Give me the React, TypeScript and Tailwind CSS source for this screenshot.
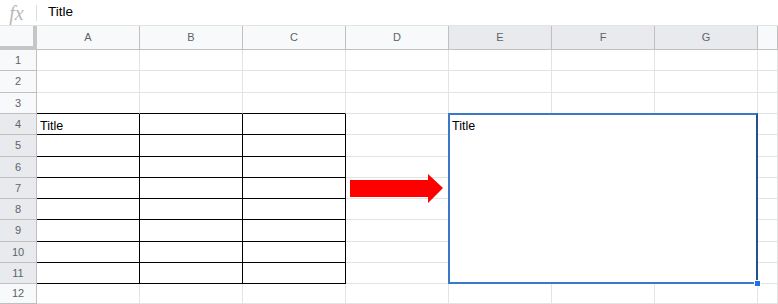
import React from 'react';

const cols = ['A', 'B', 'C', 'D', 'E', 'F', 'G', ''];
const rowHeights = [21, 22, 21, 21, 22, 21, 21, 21, 22, 21, 21, 20];

function Cell({ row, col }: { row: number; col: number }) {
  // table A4:C11 has black borders
  const inTable = row >= 4 && row <= 11 && col <= 2;
  const aboveTable = row === 3 && col <= 2;
  const bottom = inTable || aboveTable ? 'border-b-black' : 'border-b-[#e2e3e3]';
  const right = inTable ? 'border-r-black' : 'border-r-[#e2e3e3]';
  return (
    <div className={`border-r border-b ${bottom} ${right} bg-white text-[12.5px] text-black px-[3px] pt-[5px] leading-[14px] overflow-hidden`}>
      {row === 4 && col === 0 ? 'Title' : ''}
    </div>
  );
}

export default function App() {
  const selectedCols = [4, 5, 6];

  return (
    <div className="w-[778px] h-[304px] overflow-hidden bg-white" style={{ fontFamily: '"Liberation Sans", Arial, sans-serif' }}>
      {/* formula bar */}
      <div className="h-[26px] flex items-center border-b border-[#e2e3e3]">
        <div className="w-[36px] flex justify-center pr-[3px] text-[#b8b8b8] text-[20px] italic" style={{ fontFamily: '"Liberation Serif", serif' }}>
          fx
        </div>
        <div className="w-px h-[16px] bg-[#dadce0]" />
        <div className="pl-[11px] text-[13.5px] text-black">Title</div>
      </div>

      {/* sheet */}
      <div className="relative grid grid-cols-[37px_repeat(7,103px)_1fr] grid-rows-[24px_21px_22px_21px_21px_22px_21px_21px_21px_22px_21px_21px_20px]">
        {/* corner */}
        <div className="bg-[#f8f9fa] border-r-4 border-b-4 border-[#c4c7c5]" />
        {cols.map((c, i) => (
          <div
            key={i}
            className={`flex items-center justify-center text-[11px] text-[#5f6368] border-r border-b border-[#c0c0c0] ${
              selectedCols.includes(i) ? 'bg-[#e8eaed]' : 'bg-[#f8f9fa]'
            }`}
          >
            {c}
          </div>
        ))}

        {rowHeights.map((_, ri) => {
          const row = ri + 1;
          const selected = row >= 4 && row <= 11;
          return (
            <React.Fragment key={row}>
              <div
                className={`flex items-center justify-center text-[11px] text-[#5f6368] border-r border-b border-[#c0c0c0] ${
                  selected ? 'bg-[#e8eaed]' : 'bg-[#f8f9fa]'
                }`}
              >
                {row}
              </div>
              {cols.map((_, ci) => {
                if (row === 4 && ci === 4) {
                  return (
                    <div
                      key={ci}
                      className="relative col-span-3 row-span-8 border-2 border-[#3b78c8] border-r-[#27508a] bg-white text-[12.5px] text-black px-[2px] pt-[4px] leading-[14px] -ml-px -mt-px"
                    >
                      Title
                      <div className="absolute -right-[5px] -bottom-[5px] w-[7px] h-[7px] bg-[#1a73e8] border border-white" />
                    </div>
                  );
                }
                if (row >= 4 && row <= 11 && ci >= 4 && ci <= 6) return null;
                return <Cell key={ci} row={row} col={ci} />;
              })}
            </React.Fragment>
          );
        })}

        {/* arrow */}
        <svg className="absolute left-[350px] top-[148px]" width="94" height="30" viewBox="0 0 94 30">
          <polygon points="0,6 78,6 78,0 93,14 78,29 78,23 0,23" fill="#ff0000" />
        </svg>
      </div>
    </div>
  );
}
